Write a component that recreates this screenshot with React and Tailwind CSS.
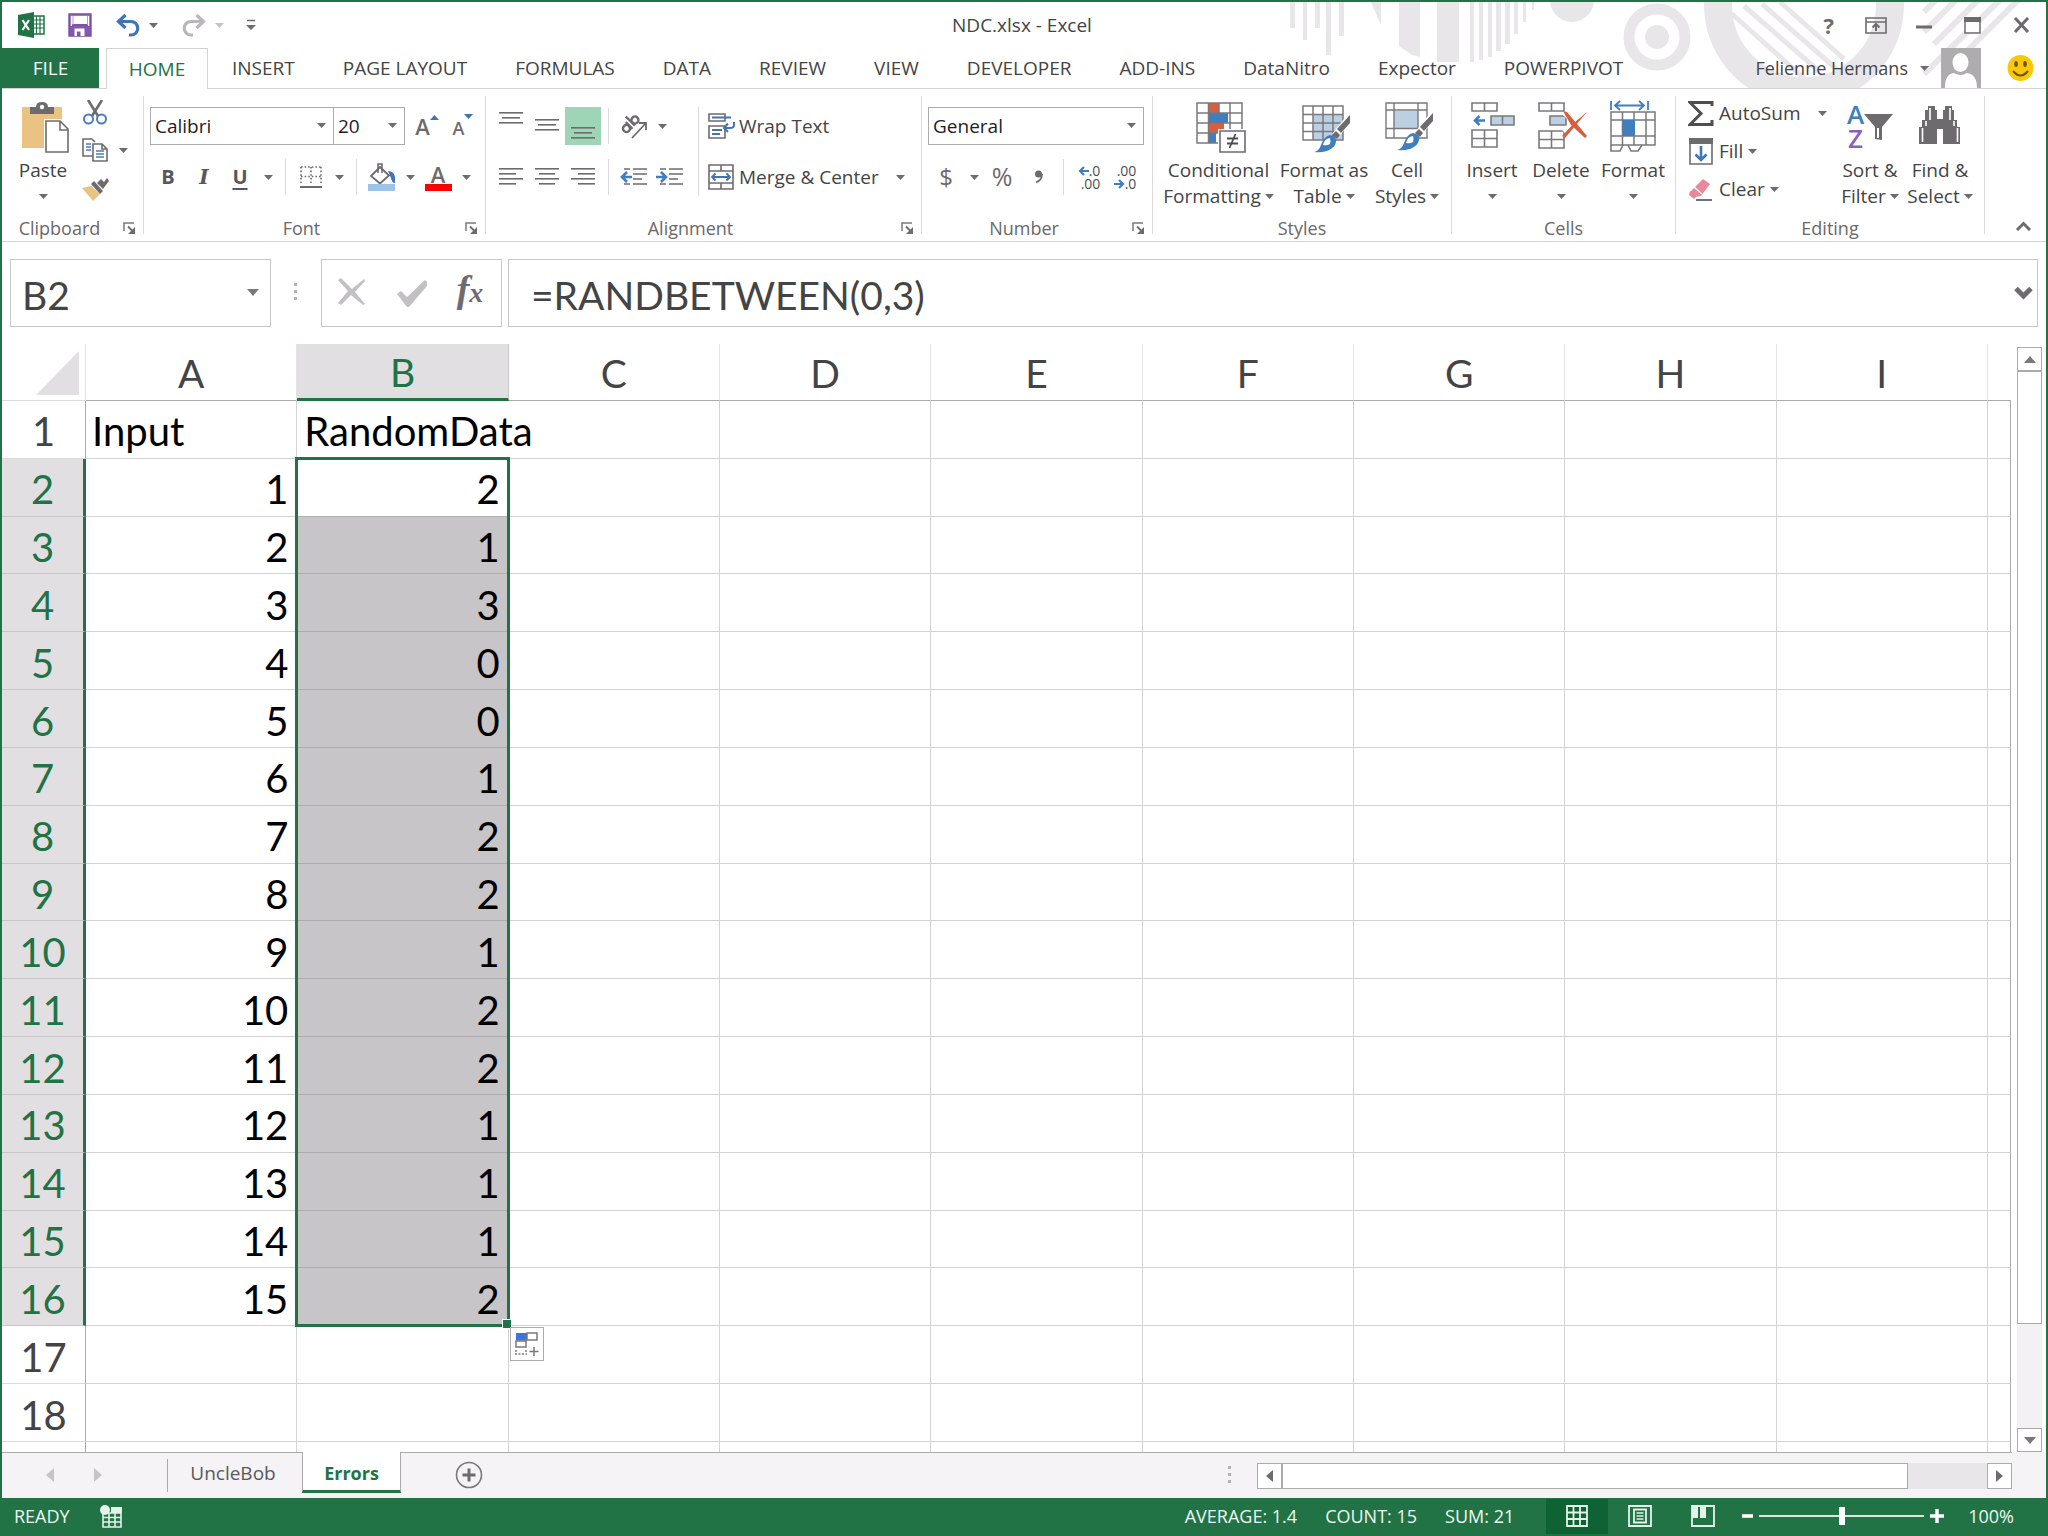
import React from "react";

const COLUMNS = ["A", "B", "C", "D", "E", "F", "G", "H", "I"];
const RANDOM = [2, 1, 3, 0, 0, 1, 2, 2, 1, 2, 2, 1, 1, 1, 2];
const ROWS = Array.from({ length: 18 }, (_, i) => {
  const n = i + 1;
  if (n === 1) return { n, a: "Input", b: "RandomData" };
  if (n <= 16) return { n, a: n - 1, b: RANDOM[n - 2] };
  return { n, a: "", b: "" };
});
const TABS = [
  "INSERT",
  "PAGE LAYOUT",
  "FORMULAS",
  "DATA",
  "REVIEW",
  "VIEW",
  "DEVELOPER",
  "ADD-INS",
  "DataNitro",
  "Expector",
  "POWERPIVOT",
];

function Svg({ w, h, children, className = "" }) {
  return (
    <svg
      width={w}
      height={h}
      viewBox={`0 0 ${w} ${h}`}
      fill="none"
      aria-hidden="true"
      className={"block shrink-0 " + className}
    >
      {children}
    </svg>
  );
}

function Caret({ className = "text-[#6d6b6e]" }) {
  return (
    <Svg w={9} h={5} className={className}>
      <path d="M0 0h9L4.500 5z" fill="currentColor" />
    </Svg>
  );
}

/* ---------- title bar ---------- */

function TitleArt() {
  const bars = [
    [10, 5, 28], [23, 4, 40], [35, 5, 28], [46, 5, 55], [59, 5, 36],
    [157, 22, 62], [190, 4, 62], [199, 4, 60], [208, 4, 57], [216, 5, 51],
    [225, 5, 44], [234, 4, 34], [243, 3, 22], [252, 2, 10],
  ];
  return (
    <svg
      width="766"
      height="86"
      viewBox="0 2 766 86"
      aria-hidden="true"
      className="absolute top-0 right-0 text-[#e8e6e9]"
    >
      <g fill="currentColor">
        {bars.map(([x, w, b]) => (
          <rect key={x} x={x} y="0" width={w} height={b} />
        ))}
        <path d="M90 0h11v25z" />
        <path d="M119 0h21v57l-8-2-13-9z" />
        <circle cx="292" cy="0" r="22" />
        <circle cx="377" cy="37" r="12" />
      </g>
      <g fill="none" stroke="currentColor">
        <circle cx="377" cy="37" r="28" strokeWidth="11" />
        <circle cx="524" cy="5" r="86" strokeWidth="28" />
        <path d="M452 14l74 66M464 6l76 66M482 4l78 68M500 2l64 57" strokeWidth="5" />
        <path d="M644 12l12-12M644 32l34-34M654 44l46-46M644 74l78-76M684 54l56-56" strokeWidth="6" />
      </g>
    </svg>
  );
}

function TitleBar() {
  return (
    <header className="relative grid h-[46px] grid-cols-[1fr_auto_1fr] items-center">
      <div className="flex items-center pl-4">
        <Svg w={27} h={26}>
          <path d="M15 4h11v18H15z" fill="#fff" stroke="#217346" strokeWidth="1.500" />
          <path d="M15 8h11M15 12h11M15 16h11M18.500 4v18M22 4v18" stroke="#217346" strokeWidth="1.200" />
          <path d="M0 3L16 0v26L0 23z" fill="#217346" />
          <path d="M4.500 8l6.500 10M11 8L4.500 18" stroke="#fff" strokeWidth="2.200" />
        </Svg>
        <button aria-label="Save" className="ml-[23px]">
          <Svg w={24} h={24}>
            <path d="M1.500 1.500h21v21h-21z" stroke="#7d4fa5" strokeWidth="2.400" fill="#fff" />
            <path d="M4 12h16" stroke="#7d4fa5" strokeWidth="2" />
            <path d="M2 13h20v9H2z" fill="#8259ab" />
            <path d="M6.500 15.500h10V23h-4v-4.500H9V23H6.500z" fill="#fff" />
            <path d="M5 3v9M19.500 3v9" stroke="#b79bd0" strokeWidth="1" />
          </Svg>
        </button>
        <button aria-label="Undo" className="ml-6">
          <Svg w={24} h={23}>
            <path d="M2 7.500h13a6.500 6.500 0 0 1 0 13.500h-2M9.500 1L2.500 7.500l7 6.500" stroke="#3f74b5" strokeWidth="3.200" />
          </Svg>
        </button>
        <button aria-label="Undo history" className="ml-[9px]">
          <Caret />
        </button>
        <button aria-label="Redo" className="ml-6">
          <Svg w={24} h={23}>
            <path d="M22 7.500H9A6.500 6.500 0 0 0 9 21h2M14.500 1l7 6.500-7 6.500" stroke="#b9b7ba" strokeWidth="3.200" />
          </Svg>
        </button>
        <button aria-label="Redo history" className="ml-[9px]">
          <Caret className="text-[#c6c4c7]" />
        </button>
        <button aria-label="Customize Quick Access Toolbar" className="ml-[22px]">
          <Svg w={10} h={12}>
            <path d="M1 1.500h8" stroke="#6d6b6e" strokeWidth="1.500" />
            <path d="M0 6h10l-5 5z" fill="#6d6b6e" />
          </Svg>
        </button>
      </div>
      <h1 className="pr-1 text-[19px]">NDC.xlsx - Excel</h1>
      <div className="flex items-center justify-end pr-4">
        <button aria-label="Help" className="mr-[31px] text-[22px] leading-6 font-bold text-[#6d6b6e]">?</button>
        <button aria-label="Ribbon display options" className="mr-[29px]">
          <Svg w={22} h={17}>
            <path d="M1 1h20v15H1zM1 5h20" stroke="#6d6b6e" strokeWidth="1.600" />
            <path d="M11 14V8M7.500 10.500L11 7l3.500 3.500" stroke="#6d6b6e" strokeWidth="2" />
          </Svg>
        </button>
        <button aria-label="Minimize" className="mr-8 pt-1">
          <Svg w={16} h={4}>
            <path d="M0 2h16" stroke="#6d6b6e" strokeWidth="3" />
          </Svg>
        </button>
        <button aria-label="Maximize" className="mr-8">
          <Svg w={17} h={17}>
            <path d="M1 1h15v15H1z" stroke="#6d6b6e" strokeWidth="1.500" fill="#fff" />
            <path d="M0 0h17v5H0z" fill="#6d6b6e" />
          </Svg>
        </button>
        <button aria-label="Close">
          <Svg w={17} h={16}>
            <path d="M2 1l13 14M15 1L2 15" stroke="#6d6b6e" strokeWidth="3" />
          </Svg>
        </button>
      </div>
    </header>
  );
}

function TabStrip() {
  return (
    <nav className="relative flex h-10 text-[19px]">
      <button className="-ml-0.5 w-[99px] bg-[#217346] pr-5 pl-[22px] text-white">FILE</button>
      <button className="z-10 -mb-px ml-[7px] w-[102px] border border-b-0 border-[#d4d2d5] bg-white text-[#217346]">
        HOME
      </button>
      {TABS.map((t) => (
        <button key={t} className="px-6 whitespace-nowrap">
          {t}
        </button>
      ))}
      <div className="ml-auto flex items-center">
        <button className="flex items-center gap-3 text-[18px]">
          Felienne Hermans
          <Caret />
        </button>
        <Svg w={40} h={40} className="ml-3">
          <path d="M0 0h40v40H0z" fill="#aeacaf" />
          <ellipse cx="19.500" cy="14.500" rx="8" ry="9.500" fill="#fff" />
          <path d="M4 40c0-10 3-14 9-15q6.500 4 13 0c6 1 10 5 10 15z" fill="#fff" />
        </Svg>
        <button aria-label="Send a smile" className="mr-3 ml-[26px]">
          <Svg w={27} h={28}>
            <circle cx="13.500" cy="14" r="13" fill="#fac80a" />
            <ellipse cx="9" cy="10" rx="1.800" ry="3" fill="#6b5410" />
            <ellipse cx="18" cy="10" rx="1.800" ry="3" fill="#6b5410" />
            <path d="M6 17q7.500 9 15 0" stroke="#6b5410" strokeWidth="2" />
          </Svg>
        </button>
      </div>
    </nav>
  );
}

/* ---------- ribbon ---------- */

function Launcher({ label }) {
  return (
    <button aria-label={label} className="flex w-[26px] justify-center pr-0.5">
      <Svg w={13} h={12}>
        <path d="M1 9V1h10" stroke="#7a787b" strokeWidth="1.500" />
        <path d="M5 4.500l5 5" stroke="#6d6b6e" strokeWidth="1.800" />
        <path d="M12 5v7H5z" fill="#6d6b6e" />
      </Svg>
    </button>
  );
}

function Group({ label, width, launcher, children }) {
  return (
    <>
      <section aria-label={label} className={"flex shrink-0 flex-col " + width}>
        <div className="flex flex-1">{children}</div>
        <div className="mb-px flex h-6 items-center">
          <span className="flex-1 text-center text-[18px] leading-6 text-[#6a686b]">{label}</span>
          {launcher && <Launcher label={label + " settings"} />}
        </div>
      </section>
      <div className="my-[7px] w-px shrink-0 bg-[#dcdadd]" />
    </>
  );
}

function IconButton({ label, active, children }) {
  return (
    <button
      aria-label={label}
      className={"flex h-[38px] w-9 shrink-0 items-center justify-center " + (active ? "bg-[#9fd5b7]" : "")}
    >
      {children}
    </button>
  );
}

function CaretButton({ label }) {
  return (
    <button aria-label={label} className="flex h-[38px] w-5 shrink-0 items-center justify-center">
      <Caret />
    </button>
  );
}

function Divider() {
  return <div className="mx-[7px] h-9 w-px shrink-0 bg-[#dcdadd]" />;
}

function Combo({ label, value, className }) {
  return (
    <div className={"relative h-[38px] shrink-0 " + className}>
      <select
        aria-label={label}
        className="h-full w-full appearance-none border border-[#ababab] bg-white px-1 text-[19px] text-[#1e1c1f]"
      >
        <option>{value}</option>
      </select>
      <Caret className="pointer-events-none absolute top-4 right-2 text-[#6d6b6e]" />
    </div>
  );
}

function BigButton({ width, icon, lines }) {
  return (
    <button className={"flex shrink-0 flex-col items-center self-start pt-[13px] text-[19px] leading-[26px] " + width}>
      <span className="flex h-[55px] flex-col items-center">{icon}</span>
      <span className="whitespace-nowrap">{lines[0]}</span>
      <span className="flex h-[26px] items-center gap-1 whitespace-nowrap">
        {lines[1]}
        <Caret />
      </span>
    </button>
  );
}

function Lines({ rows }) {
  return (
    <Svg w={24} h={30}>
      {rows.map(([x, y, w]) => (
        <rect key={y} x={x} y={y} width={w} height="1.600" fill="#6d6b6e" />
      ))}
    </Svg>
  );
}

function Clipboard() {
  return (
    <Group label="Clipboard" width="w-[141px]" launcher>
      <div className="flex pl-[15px]">
        <BigButton
          width="w-[52px]"
          lines={["Paste", ""]}
          icon={
            <Svg w={48} h={51} className="ml-1">
              <path d="M1 5h40v41H1z" fill="#eac282" />
              <path d="M9 12V5h6q0-5 6-5t6 5h6v7z" fill="#6d6b6e" />
              <circle cx="21" cy="5" r="2.200" fill="#fff" />
              <path d="M23 17h17l9 9v25H23z" fill="#fff" />
              <path d="M25 19h14l8 8v23H25zM39 19v9h8" fill="#fff" stroke="#6d6b6e" strokeWidth="1.600" />
            </Svg>
          }
        />
        <div className="flex flex-col pt-1 pl-2">
          <IconButton label="Cut">
            <Svg w={24} h={25}>
              <path d="M5 0l10 16M19 0L9 16" stroke="#6d6b6e" strokeWidth="2.600" />
              <circle cx="5.500" cy="19" r="4.500" stroke="#4a7ebb" strokeWidth="2" />
              <circle cx="18.500" cy="19" r="4.500" stroke="#4a7ebb" strokeWidth="2" />
            </Svg>
          </IconButton>
          <div className="flex">
            <IconButton label="Copy">
              <Svg w={26} h={24}>
                <path d="M11 18H1V1h9l3 3" stroke="#6d6b6e" strokeWidth="1.600" />
                <path d="M4 6h5M4 9h5M4 12h5" stroke="#4a7ebb" strokeWidth="1.500" />
                <path d="M11 6h9l5 5v12H11zM20 6v5h5" fill="#fff" stroke="#6d6b6e" strokeWidth="1.600" />
                <path d="M14 13h8M14 16h8M14 19h8" stroke="#4a7ebb" strokeWidth="1.500" />
              </Svg>
            </IconButton>
            <CaretButton label="Copy options" />
          </div>
          <IconButton label="Format Painter">
            <Svg w={27} h={25}>
              <path d="M0 12l9-2 9 8-7 7z" fill="#eac282" />
              <path d="M9 8l3-3 9 10-3 3z" fill="#6d6b6e" />
              <path d="M15 7l4-4 3 3 3-4 2 3-3 4-3 4z" fill="#6d6b6e" />
            </Svg>
          </IconButton>
        </div>
      </div>
    </Group>
  );
}

function Font() {
  return (
    <Group label="Font" width="w-[341px]" launcher>
      <div className="flex flex-col gap-[13px] pt-[18px] pl-1.5">
        <div className="flex">
          <Combo label="Font name" value="Calibri" className="w-[184px]" />
          <Combo label="Font size" value="20" className="-ml-px mr-1 w-[72px]" />
          <IconButton label="Increase font size">
            <span className="text-[22px] font-semibold text-[#6d6b6e]">A</span>
            <Svg w={9} h={22}>
              <path d="M0 5l4.500-5L9 5z" fill="#3f74b5" />
            </Svg>
          </IconButton>
          <IconButton label="Decrease font size">
            <span className="pt-1 text-[18px] font-semibold text-[#6d6b6e]">A</span>
            <Svg w={9} h={24}>
              <path d="M0 0h9L4.500 5z" fill="#3f74b5" />
            </Svg>
          </IconButton>
        </div>
        <div className="flex items-center text-[20px] text-[#58565a]">
          <IconButton label="Bold">
            <b>B</b>
          </IconButton>
          <IconButton label="Italic">
            <i className="font-['DejaVu_Serif',serif] font-bold">I</i>
          </IconButton>
          <IconButton label="Underline">
            <b className="underline underline-offset-4">U</b>
          </IconButton>
          <CaretButton label="Underline options" />
          <Divider />
          <IconButton label="Borders">
            <Svg w={22} h={22}>
              <path d="M1 1h20M1 10.500h20M1 1v18M11 1v18M21 1v18" stroke="#6d6b6e" strokeWidth="1.600" strokeDasharray="1.600 2" />
              <path d="M0 21h22" stroke="#6d6b6e" strokeWidth="2" />
            </Svg>
          </IconButton>
          <CaretButton label="Border options" />
          <Divider />
          <IconButton label="Fill color">
            <Svg w={28} h={28}>
              <path d="M12 4l9 8.500-9 8-9-7.500z" stroke="#6d6b6e" strokeWidth="1.800" />
              <path d="M10 10V1h4v9" stroke="#6d6b6e" strokeWidth="1.600" />
              <path d="M20 8q6 0 7 6v6q-3 0-4-5z" fill="#3f74b5" />
              <path d="M0 21h27v7H0z" fill="#9dc3e8" />
            </Svg>
          </IconButton>
          <CaretButton label="Fill color options" />
          <IconButton label="Font color">
            <span className="flex flex-col items-center">
              <span className="text-[22px] leading-5 font-semibold text-[#6d6b6e]">A</span>
              <span className="h-[7px] w-[27px] bg-[#ff0000]" />
            </span>
          </IconButton>
          <CaretButton label="Font color options" />
        </div>
      </div>
    </Group>
  );
}

function Alignment() {
  return (
    <Group label="Alignment" width="w-[435px]" launcher>
      <div className="flex items-start pt-[18px] pl-[7px]">
        <div className="flex flex-col gap-[13px]">
          <div className="flex items-center">
            <IconButton label="Top align">
              <Lines rows={[[0, 1, 24], [3, 6, 18], [0, 11, 24]]} />
            </IconButton>
            <IconButton label="Middle align">
              <Lines rows={[[0, 8, 24], [3, 13, 18], [0, 18, 24]]} />
            </IconButton>
            <IconButton label="Bottom align" active>
              <Lines rows={[[0, 16, 24], [3, 21, 18], [0, 26, 24]]} />
            </IconButton>
            <Divider />
            <IconButton label="Orientation">
              <Svg w={28} h={26}>
                <g transform="rotate(-45 10 12)">
                  <circle cx="5" cy="12" r="3.500" stroke="#6d6b6e" strokeWidth="2.400" />
                  <path d="M9 7v9.500M13 3v13" stroke="#6d6b6e" strokeWidth="2.400" />
                  <circle cx="17" cy="12" r="3.500" stroke="#6d6b6e" strokeWidth="2.400" />
                </g>
                <path d="M12 25L26 10M19 10h7v7" stroke="#6d6b6e" strokeWidth="1.800" />
              </Svg>
            </IconButton>
            <CaretButton label="Orientation options" />
          </div>
          <div className="flex items-center">
            <IconButton label="Align left">
              <Lines rows={[[0, 6, 24], [0, 11, 17], [0, 16, 24], [0, 21, 17]]} />
            </IconButton>
            <IconButton label="Center">
              <Lines rows={[[0, 6, 24], [4, 11, 16], [0, 16, 24], [4, 21, 16]]} />
            </IconButton>
            <IconButton label="Align right">
              <Lines rows={[[0, 6, 24], [7, 11, 17], [0, 16, 24], [7, 21, 17]]} />
            </IconButton>
            <Divider />
            <IconButton label="Decrease indent">
              <Svg w={28} h={18}>
                <path d="M4 1h6M13 1h14M13 6h14M13 11h9M4 16h6M13 16h14" stroke="#6d6b6e" strokeWidth="1.600" />
                <path d="M12 9H2M7 4L2 9l5 5" stroke="#3f7fbf" strokeWidth="2.600" />
              </Svg>
            </IconButton>
            <IconButton label="Increase indent">
              <Svg w={28} h={18}>
                <path d="M4 1h6M13 1h14M13 6h14M13 11h9M4 16h6M13 16h14" stroke="#6d6b6e" strokeWidth="1.600" />
                <path d="M0 9h10M5 4l5 5-5 5" stroke="#3f7fbf" strokeWidth="2.600" />
              </Svg>
            </IconButton>
          </div>
        </div>
        <div className="mr-[9px] ml-2.5 h-[89px] w-px bg-[#dcdadd]" />
        <div className="flex flex-col gap-[13px]">
          <button className="flex h-[38px] items-center gap-1 text-[19px]">
            <Svg w={27} h={26}>
              <path d="M1 1h16v7H1zM1 13h16v12H1z" stroke="#6d6b6e" strokeWidth="1.600" />
              <path d="M4 4.500h19M4 17h10M4 21h8" stroke="#3f74b5" strokeWidth="1.800" />
              <path d="M26 9v3q0 3-4 3h-5M20 10.500L16 15l4 4" stroke="#3f74b5" strokeWidth="2" />
            </Svg>
            Wrap Text
          </button>
          <div className="flex">
            <button className="flex h-[38px] items-center gap-[5px] text-[19px] whitespace-nowrap">
              <Svg w={26} h={26}>
                <path d="M1 1h24v24H1zM1 7h24M1 19h24M13 1v6M13 19v6" stroke="#6d6b6e" strokeWidth="1.600" />
                <path d="M4 13h18M7.500 9.500L4 13l3.500 3.500M18.500 9.500L22 13l-3.500 3.500" stroke="#3f74b5" strokeWidth="1.800" />
              </Svg>
              Merge &amp; Center
            </button>
            <span className="ml-3">
              <CaretButton label="Merge options" />
            </span>
          </div>
        </div>
      </div>
    </Group>
  );
}

function NumberGroup() {
  return (
    <Group label="Number" width="w-[230px]" launcher>
      <div className="flex flex-col gap-[13px] pt-[18px] pl-1.5">
        <Combo label="Number format" value="General" className="w-[216px]" />
        <div className="flex items-center text-[#6d6b6e]">
          <IconButton label="Accounting format">
            <span className="text-[24px]">$</span>
          </IconButton>
          <CaretButton label="Accounting options" />
          <IconButton label="Percent style">
            <span className="text-[25px]">%</span>
          </IconButton>
          <IconButton label="Comma style">
            <Svg w={9} h={14}>
              <circle cx="4.500" cy="4" r="3.500" fill="#6d6b6e" />
              <path d="M8 4q0 6-6 8.500" stroke="#6d6b6e" strokeWidth="1.800" />
            </Svg>
          </IconButton>
          <Divider />
          <IconButton label="Increase decimal">
            <span className="flex flex-col items-end text-[14px] leading-[13px] text-[#4f4d50]">
              <span className="flex items-center">
                <Svg w={11} h={10}>
                  <path d="M11 5H2M6 1L2 5l4 4" stroke="#3f7fbf" strokeWidth="2.200" />
                </Svg>
                .0
              </span>
              <span>.00</span>
            </span>
          </IconButton>
          <IconButton label="Decrease decimal">
            <span className="flex flex-col items-end text-[14px] leading-[13px] text-[#4f4d50]">
              <span>.00</span>
              <span className="flex items-center">
                <Svg w={11} h={10}>
                  <path d="M0 5h9M5 1l4 4-4 4" stroke="#3f7fbf" strokeWidth="2.200" />
                </Svg>
                .0
              </span>
            </span>
          </IconButton>
        </div>
      </div>
    </Group>
  );
}

function Brush() {
  return (
    <>
      <path d="M46 10l2 1v8L35 35l-5-5z" fill="#fff" />
      <path d="M48 11v8l-9 10-4-4z" fill="#6d6b6e" />
      <path d="M34 27l4 4-3 4-5-4z" fill="#6d6b6e" />
      <path d="M28 31q7 1 6 7-1 6-9 9-7 2-13 1 5-1 7-7 3-9 9-10z" fill="#3f7fbf" />
      <path d="M28 34q-6 1-7 7 4 1 7-1 1-3 0-6z" fill="#fff" />
    </>
  );
}

function Styles() {
  return (
    <Group label="Styles" width="w-[298px]">
      <div className="flex gap-[3px] pl-[7px]">
        <BigButton
          width="w-[117px]"
          lines={["Conditional", "Formatting"]}
          icon={
            <Svg w={50} h={51} className="ml-1">
              <path d="M1 1h45v40H1z" fill="#fff" />
              <path d="M13 1h10v10H13zM13 21h15v10H13z" fill="#d95f3c" />
              <path d="M13 11h19v10H13zM13 31h7v10h-7z" fill="#3f7fbf" />
              <path d="M1 1h45v40H1zM1 11h45M1 21h45M1 31h24M12.500 1v40M23 1v10M34 1v28" stroke="#7a787b" strokeWidth="1.500" />
              <path d="M22 27h28v24H22z" fill="#fff" />
              <path d="M24 29h25v21H24z" fill="#fff" stroke="#6d6b6e" strokeWidth="1.600" />
              <path d="M31 36.500h11M31 41.500h11M39.500 32l-6 14" stroke="#4f4d50" strokeWidth="1.800" />
            </Svg>
          }
        />
        <BigButton
          width="w-[88px]"
          lines={["Format as", "Table"]}
          icon={
            <Svg w={49} h={52} className="ml-1">
              <path d="M1 4h40v34H1z" fill="#fff" />
              <path d="M11 13h30v25H11z" fill="#bcd0e3" />
              <path d="M1 4h40v34H1zM1 12.500h40M1 21h40M1 29.500h40M11 4v34M21 4v34M31 4v34" stroke="#7a787b" strokeWidth="1.500" />
              <g transform="translate(0 2)">
                <Brush />
              </g>
            </Svg>
          }
        />
        <BigButton
          width="w-[72px]"
          lines={["Cell", "Styles"]}
          icon={
            <Svg w={49} h={52} className="ml-1">
              <path d="M1 1h41v35H1z" fill="#fff" />
              <path d="M9 9h24v17H9z" fill="#bcd0e3" />
              <path d="M1 1h41v35H1zM1 8h41M1 26.500h41M9 1v35M33 1v35" stroke="#7a787b" strokeWidth="1.400" />
              <Brush />
            </Svg>
          }
        />
      </div>
    </Group>
  );
}

function Cells() {
  return (
    <Group label="Cells" width="w-[223px]">
      <div className="flex gap-[3px] pl-[9px]">
        <BigButton
          width="w-[62px]"
          lines={["Insert", ""]}
          icon={
            <Svg w={44} h={48} className="ml-0.5">
              <path d="M1 1h25v8H1zM13.500 1v8M1 28h25v17H1zM13.500 28v17M1 36.500h25" stroke="#7a787b" strokeWidth="1.600" />
              <path d="M20 14h23v9H20zM31.500 14v9" fill="#bcd0e3" stroke="#7a787b" strokeWidth="1.600" />
              <path d="M14 18.500H4M8.500 14L4 18.500 8.500 23" stroke="#3f7fbf" strokeWidth="2.600" />
            </Svg>
          }
        />
        <BigButton
          width="w-[70px]"
          lines={["Delete", ""]}
          icon={
            <Svg w={50} h={48} className="ml-1">
              <path d="M1 1h25v8H1zM13.500 1v8M1 29h25v17H1zM13.500 29v17M1 37.500h25" stroke="#7a787b" strokeWidth="1.600" />
              <path d="M12 14h16v9H12z" fill="#bcd0e3" stroke="#7a787b" strokeWidth="1.600" />
              <path d="M26 10l22 20M48 10L26 30" stroke="#fff" strokeWidth="6" />
              <path d="M25 9l4 1 20 24-2 2-14-13zM49 10L27 36l-3-2 13-14z" fill="#d95f3c" />
            </Svg>
          }
        />
        <BigButton
          width="w-[68px]"
          lines={["Format", ""]}
          icon={
            <Svg w={48} h={52} className="-mt-0.5">
              <path d="M2 1v9M39 1v9M6 5.500h29M11 1L6 5.500l5 4.500M30 1l5 4.500L30 10" stroke="#3f7fbf" strokeWidth="1.800" />
              <path d="M2 12h44v33H2zM2 20h44M2 36h44M13.500 12v33M25 12v33M37 12v33" stroke="#7a787b" strokeWidth="1.500" />
              <path d="M13.500 20H26v16H13.500z" fill="#3f7fbf" />
              <path d="M2 45v6h9l3-6M19 45l3 6h7l4-6" stroke="#7a787b" strokeWidth="1.600" />
            </Svg>
          }
        />
      </div>
    </Group>
  );
}

function Editing() {
  const row = "flex h-[38px] items-center gap-[5px] text-[19px]";
  return (
    <Group label="Editing" width="w-[308px]">
      <div className="flex pl-3">
        <div className="flex w-[149px] flex-col pt-[5px]">
          <div className={row}>
            <button className="flex items-center gap-[5px]">
              <Svg w={26} h={25}>
                <path d="M24 5V1.500H2l11 11-11 11h22V19" stroke="#4f4d50" strokeWidth="3" />
              </Svg>
              AutoSum
            </button>
            <span className="ml-[7px]">
              <CaretButton label="AutoSum options" />
            </span>
          </div>
          <button className={row}>
            <Svg w={26} h={27}>
              <path d="M2 1h22v25H2z" stroke="#6d6b6e" strokeWidth="1.600" />
              <path d="M1 0h24v6H1z" fill="#6d6b6e" />
              <path d="M13 8v14M7.500 16.500L13 22l5.500-5.500" stroke="#3f74b5" strokeWidth="2.600" />
            </Svg>
            Fill
            <Caret />
          </button>
          <button className={row}>
            <Svg w={26} h={23}>
              <path d="M15 1l7 5-9 12-6 1-5-5z" fill="#e9879b" />
              <path d="M6 9l8 7" stroke="#fff" strokeWidth="1.500" />
              <path d="M8 22h16" stroke="#4f4d50" strokeWidth="1.600" />
              <path d="M2 13l6 6-2 2-5-4z" fill="#e9879b" />
            </Svg>
            Clear
            <Caret />
          </button>
        </div>
        <BigButton
          width="w-[66px]"
          lines={["Sort &", "Filter"]}
          icon={
            <span className="flex">
              <span className="flex flex-col text-[26px] leading-6 font-semibold">
                <span className="text-[#3f7fbf]">A</span>
                <span className="text-[#8a63b8]">Z</span>
              </span>
              <Svg w={29} h={44}>
                <path d="M0 12h29L18 25v13l-7-1V25z" fill="#6d6b6e" />
                <path d="M14 26v10" stroke="#fff" strokeWidth="2" />
              </Svg>
            </span>
          }
        />
        <BigButton
          width="ml-0.5 w-[70px]"
          lines={["Find &", "Select"]}
          icon={
            <Svg w={44} h={46}>
              <path d="M10 4h7v4h2v9h6V8h2V4h7v4h2v10h3v7h3v17H25V27h-6v15H1V25h3v-7h3V8h3z" fill="#6d6b6e" />
              <path d="M12 6v12M4.500 26v14M32 6v12M39.500 26v14M8 19v5M36 19v5" stroke="#fff" strokeWidth="1.600" />
            </Svg>
          }
        />
      </div>
    </Group>
  );
}

function Ribbon() {
  return (
    <div className="flex h-[154px] shrink-0 border-y border-[#d4d2d5] bg-white">
      <Clipboard />
      <Font />
      <Alignment />
      <NumberGroup />
      <Styles />
      <Cells />
      <Editing />
      <button aria-label="Collapse the ribbon" className="mr-3.5 mb-2.5 ml-auto self-end">
        <Svg w={17} h={10}>
          <path d="M2 9l6.500-6.500L15 9" stroke="#6d6b6e" strokeWidth="3" />
        </Svg>
      </button>
    </div>
  );
}

/* ---------- formula bar ---------- */

function Dots({ className = "" }) {
  return (
    <Svg w={4} h={18} className={className}>
      <path d="M0 0h3v3H0zM0 7h3v3H0zM0 14h3v3H0z" fill="#b3b1b4" />
    </Svg>
  );
}

function FormulaBar() {
  return (
    <div className="flex h-[102px] shrink-0 items-start pt-[17px] pr-2 pl-2 font-[Lato,sans-serif] text-[39px]">
      <div className="relative h-[68px] w-[261px] shrink-0 border border-[#c8c6c9]">
        <input
          aria-label="Name box"
          defaultValue="B2"
          className="h-full w-full bg-transparent pt-[3px] pl-[11px] text-[#444] outline-none"
        />
        <Svg w={12} h={7} className="absolute top-[29px] right-[11px]">
          <path d="M0 0h12L6 7z" fill="#7a787b" />
        </Svg>
      </div>
      <Dots className="mt-6 mr-[23px] ml-[23px]" />
      <div className="flex h-[68px] w-[181px] shrink-0 items-center border border-[#c8c6c9]">
        <button aria-label="Cancel" className="flex w-[60px] justify-center pr-0.5 pb-1">
          <Svg w={29} h={27}>
            <path d="M1 2L4 0l11 11L27 1l1 2-10 11 10 12-2 1-12-10L4 27l-3-2 10-12z" fill="#c2c0c3" />
          </Svg>
        </button>
        <button aria-label="Enter" className="flex w-[60px] justify-center">
          <Svg w={32} h={28}>
            <path d="M1 15l4-3 6 6L29 1l2 2v4L13 28h-2z" fill="#c2c0c3" />
          </Svg>
        </button>
        <button
          aria-label="Insert function"
          className="w-14 pb-1 font-['Liberation_Serif',serif] text-[38px] leading-10 font-bold text-[#6d6b6e] italic"
        >
          f<span className="text-[28px]">x</span>
        </button>
      </div>
      <div className="ml-1.5 flex h-[68px] min-w-0 flex-1 items-center border border-[#c8c6c9]">
        <input
          aria-label="Formula"
          defaultValue="=RANDBETWEEN(0,3)"
          className="h-full min-w-0 flex-1 pt-[3px] pl-[22px] text-[#444] outline-none"
        />
        <button aria-label="Expand formula bar" className="mr-1">
          <Svg w={19} h={14}>
            <path d="M2 2.500L9.500 10 17 2.500" stroke="#6d6b6e" strokeWidth="5" />
          </Svg>
        </button>
      </div>
    </div>
  );
}

/* ---------- worksheet ---------- */

function AutoFillButton() {
  return (
    <button
      aria-label="Auto fill options"
      className="absolute top-full left-full z-10 mt-0.5 ml-0.5 border border-[#ababab] bg-white p-1"
    >
      <Svg w={24} h={24}>
        <path d="M1 1h11v7H1z" fill="#3b74e0" />
        <path d="M12 1h10v7H12zM1 9h10v6H1z" stroke="#7a787b" strokeWidth="1.500" />
        <path d="M1 8h11" stroke="#7a787b" strokeWidth="1.500" />
        <path d="M0 22h12M1 18v3M11 18v3" stroke="#7a787b" strokeWidth="1.500" strokeDasharray="2 1.500" />
        <path d="M19 15v9M14.500 19.500h9" stroke="#7a787b" strokeWidth="1.500" />
      </Svg>
    </button>
  );
}

function BCell({ row }) {
  const first = row.n === 2;
  const last = row.n === 16;
  return (
    <td
      className={
        "relative border-r border-b p-0 pt-1 pr-2 text-right text-black " +
        (first ? "border-[#b4b1b5] bg-white" : "border-[#aeabaf] bg-[#c8c5c8]")
      }
    >
      {row.b}
      <span
        className={
          "pointer-events-none absolute -inset-y-px -right-0.5 -left-0.5 border-x-[3px] border-[#217346] " +
          (first ? "-top-0.5 border-t-[3px] " : "") +
          (last ? "-bottom-0.5 border-b-[3px] " : "")
        }
      />
      {last && (
        <>
          <span className="absolute -right-1 -bottom-1 z-10 size-2.5 border border-white bg-[#217346]" />
          <AutoFillButton />
        </>
      )}
    </td>
  );
}

function Worksheet() {
  return (
    <div className="flex min-h-0 flex-1 pr-1">
      <div className="min-w-0 flex-1">
        <table className="h-full w-full table-fixed border-separate border-spacing-0 font-[Lato,sans-serif] text-[40px] leading-none">
          <colgroup>
            <col className="w-[84px]" />
            {COLUMNS.map((c) => (
              <col key={c} />
            ))}
            <col className="w-[23px]" />
          </colgroup>
          <thead>
            <tr className="h-[57px]">
              <th className="border-r border-b border-r-[#e4e2e5] border-b-[#dcdadd] p-0 align-bottom">
                <Svg w={43} h={44} className="mb-[5px] ml-[34px]">
                  <path d="M43 0v44H0z" fill="#e1dfe2" />
                </Svg>
              </th>
              {COLUMNS.map((c) => (
                <th
                  key={c}
                  className={
                    "border-r p-0 pt-[3px] text-[39px] font-normal " +
                    (c === "B"
                      ? "border-b-[3px] border-r-[#c8c6c9] border-b-[#217346] bg-[#e1dfe2] text-[#217346]"
                      : "border-b border-r-[#e4e2e5] border-b-[#ababab] text-[#444]")
                  }
                >
                  {c}
                </th>
              ))}
              <th className="border-b border-[#ababab] p-0" />
            </tr>
          </thead>
          <tbody>
            {ROWS.map((r) => {
              const sel = r.n >= 2 && r.n <= 16;
              return (
                <tr key={r.n}>
                  <th
                    className={
                      "border-b p-0 pt-1 font-normal " +
                      (sel
                        ? "border-r-[3px] border-r-[#217346] border-b-[#c8c6c9] bg-[#e1dfe2] text-[#217346]"
                        : "border-r border-r-[#ababab] border-b-[#dcdadd] text-[#444]")
                    }
                  >
                    {r.n}
                  </th>
                  <td
                    className={
                      "border-r border-b border-[#d4d2d5] p-0 pt-1 text-black " +
                      (r.n === 1 ? "pl-1.5" : "pr-2 text-right")
                    }
                  >
                    {r.a}
                  </td>
                  {sel ? (
                    <BCell row={r} />
                  ) : (
                    <td
                      className={
                        "border-b border-[#d4d2d5] p-0 pt-1 pl-[7px] whitespace-nowrap text-black " +
                        (r.n === 1 ? "" : "border-r")
                      }
                    >
                      {r.b}
                    </td>
                  )}
                  {COLUMNS.slice(2).map((c) => (
                    <td key={c} className="border-r border-b border-[#d4d2d5] p-0" />
                  ))}
                  <td className="border-r border-b border-r-[#ababab] border-b-[#d4d2d5] p-0" />
                </tr>
              );
            })}
            <tr className="h-2.5">
              <td className="border-r border-[#ababab] p-0" />
              {COLUMNS.map((c) => (
                <td key={c} className="border-r border-[#d4d2d5] p-0" />
              ))}
              <td className="border-r border-[#ababab] p-0" />
            </tr>
          </tbody>
        </table>
      </div>
      <div className="mt-[3px] ml-1.5 flex w-[25px] shrink-0 flex-col bg-[#f3f1f4]">
        <button aria-label="Scroll up" className="flex h-6 items-center justify-center border border-[#ababab] bg-white">
          <Svg w={12} h={7}>
            <path d="M0 7h12L6 0z" fill="#7a787b" />
          </Svg>
        </button>
        <div className="h-[953px] border border-[#ababab] bg-white" />
        <button
          aria-label="Scroll down"
          className="mt-auto flex h-6 items-center justify-center border border-[#ababab] bg-white"
        >
          <Svg w={12} h={7}>
            <path d="M0 0h12L6 7z" fill="#7a787b" />
          </Svg>
        </button>
      </div>
    </div>
  );
}

function SheetTabs() {
  return (
    <div className="flex h-[46px] shrink-0 bg-[#f5f3f6] text-[19px]">
      <div className="flex min-w-0 flex-1 items-start border-t border-[#ababab]">
        <button aria-label="Previous sheet" className="mt-[15px] ml-11">
          <Svg w={8} h={14}>
            <path d="M8 0v14L0 7z" fill="#c6c4c7" />
          </Svg>
        </button>
        <button aria-label="Next sheet" className="mt-[15px] ml-10">
          <Svg w={8} h={14}>
            <path d="M0 0v14l8-7z" fill="#c6c4c7" />
          </Svg>
        </button>
        <div className="mt-1.5 ml-[65px] h-[33px] w-px bg-[#ababab]" />
        <button className="h-[41px] w-[134px] pr-1 text-[#5a585b]">UncleBob</button>
        <button className="-mt-px h-[41px] w-[99px] border-x border-b-[3px] border-x-[#ababab] border-b-[#217346] bg-white pt-1 pb-0 text-[18px] font-bold text-[#217346]">
          Errors
        </button>
        <button aria-label="New sheet" className="mt-2 ml-[54px]">
          <Svg w={28} h={28}>
            <circle cx="14" cy="14" r="12.500" stroke="#7a787b" strokeWidth="1.600" />
            <path d="M14 7.500v13M7.500 14h13" stroke="#6d6b6e" strokeWidth="3" />
          </Svg>
        </button>
        <Dots className="mt-[13px] mr-[25px] ml-auto" />
        <div className="mt-2.5 flex h-[26px] w-[755px] bg-[#e8e6e9]">
          <button aria-label="Scroll left" className="flex w-[25px] items-center justify-center border border-[#ababab] bg-white">
            <Svg w={7} h={12}>
              <path d="M7 0v12L0 6z" fill="#6d6b6e" />
            </Svg>
          </button>
          <div className="w-[626px] border border-[#ababab] bg-white" />
          <button
            aria-label="Scroll right"
            className="ml-auto flex w-[25px] items-center justify-center border border-[#ababab] bg-white"
          >
            <Svg w={7} h={12}>
              <path d="M0 0v12l7-6z" fill="#6d6b6e" />
            </Svg>
          </button>
        </div>
      </div>
      <div className="w-[34px] shrink-0" />
    </div>
  );
}

function StatusBar() {
  return (
    <footer className="-mx-0.5 flex h-[38px] shrink-0 items-center bg-[#217346] pr-[34px] pb-0.5 pl-3.5 text-[18px] text-[#eef7f1]">
      <span>READY</span>
      <button aria-label="Record macro" className="ml-[30px]">
        <Svg w={23} h={23}>
          <path d="M3 8h18v14H3zM3 12.500h18M3 17h18M9 8v14M15 8v14" stroke="#e4f2e9" strokeWidth="1.600" />
          <path d="M11 2h11v6H11z" fill="#e4f2e9" />
          <circle cx="5" cy="5" r="5" fill="#e4f2e9" />
        </Svg>
      </button>
      <div className="ml-auto flex gap-7">
        <span>AVERAGE: 1.4</span>
        <span>COUNT: 15</span>
        <span>SUM: 21</span>
      </div>
      <button aria-label="Normal view" className="ml-8 flex h-[35px] w-[62px] items-center justify-center bg-[#0f6234]">
        <Svg w={22} h={22}>
          <path d="M1 1h20v20H1zM1 7.500h20M1 14h20M7.500 1v20M14 1v20" stroke="#e4f2e9" strokeWidth="1.800" />
        </Svg>
      </button>
      <button aria-label="Page layout view" className="ml-5">
        <Svg w={24} h={22}>
          <path d="M1 1h22v20H1zM6 4.500h12v13H6z" stroke="#e4f2e9" strokeWidth="1.800" />
          <path d="M8.500 8h7M8.500 11h7M8.500 14h7" stroke="#e4f2e9" strokeWidth="1.400" />
        </Svg>
      </button>
      <button aria-label="Page break preview" className="ml-[39px]">
        <Svg w={24} h={22}>
          <path d="M1 1h22v20H1z" stroke="#e4f2e9" strokeWidth="1.800" />
          <path d="M1 1h6v12H1zM9 1h6v12H9z" fill="#e4f2e9" />
        </Svg>
      </button>
      <button aria-label="Zoom out" className="ml-[27px]">
        <Svg w={11} h={14}>
          <path d="M0 7h11" stroke="#fff" strokeWidth="3.600" />
        </Svg>
      </button>
      <input
        type="range"
        aria-label="Zoom"
        defaultValue="50"
        className="mx-1.5 h-5 w-[165px] appearance-none bg-[linear-gradient(#d5e8dc,#d5e8dc)] bg-[length:100%_2px] bg-center bg-no-repeat [&::-webkit-slider-thumb]:h-[18px] [&::-webkit-slider-thumb]:w-1.5 [&::-webkit-slider-thumb]:appearance-none [&::-webkit-slider-thumb]:bg-white"
      />
      <button aria-label="Zoom in">
        <Svg w={14} h={14}>
          <path d="M0 7h14M7 0v14" stroke="#fff" strokeWidth="3.400" />
        </Svg>
      </button>
      <button className="ml-6">100%</button>
    </footer>
  );
}

export default function App() {
  return (
    <div className="flex h-screen flex-col border-x-2 border-t-2 border-[#217346] bg-white font-['Open_Sans',sans-serif] text-[#444]">
      <div className="relative shrink-0">
        <TitleArt />
        <TitleBar />
        <TabStrip />
      </div>
      <Ribbon />
      <FormulaBar />
      <Worksheet />
      <SheetTabs />
      <StatusBar />
    </div>
  );
}
